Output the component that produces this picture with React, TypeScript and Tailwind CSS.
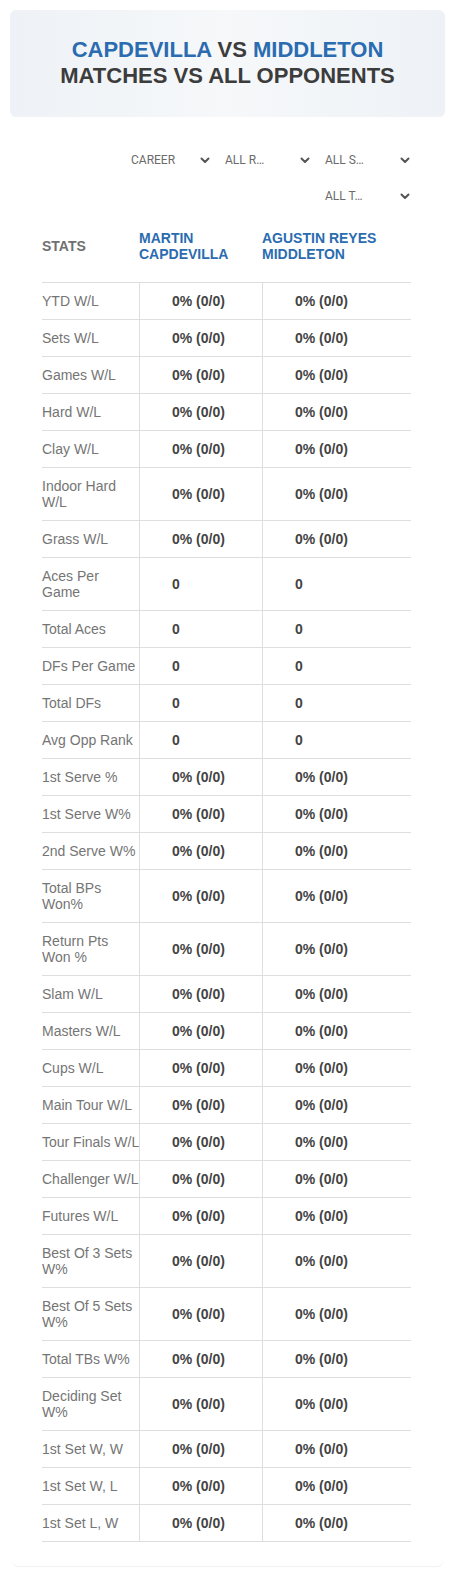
import React from "react";

type Row = { label: React.ReactNode; v: string };

const P = "0% (0/0)";
const rows: Row[] = [
  { label: "YTD W/L", v: P },
  { label: "Sets W/L", v: P },
  { label: "Games W/L", v: P },
  { label: "Hard W/L", v: P },
  { label: "Clay W/L", v: P },
  { label: <>Indoor Hard<br />W/L</>, v: P },
  { label: "Grass W/L", v: P },
  { label: <>Aces Per<br />Game</>, v: "0" },
  { label: "Total Aces", v: "0" },
  { label: "DFs Per Game", v: "0" },
  { label: "Total DFs", v: "0" },
  { label: "Avg Opp Rank", v: "0" },
  { label: "1st Serve %", v: P },
  { label: "1st Serve W%", v: P },
  { label: "2nd Serve W%", v: P },
  { label: <>Total BPs<br />Won%</>, v: P },
  { label: <>Return Pts<br />Won %</>, v: P },
  { label: "Slam W/L", v: P },
  { label: "Masters W/L", v: P },
  { label: "Cups W/L", v: P },
  { label: "Main Tour W/L", v: P },
  { label: "Tour Finals W/L", v: P },
  { label: "Challenger W/L", v: P },
  { label: "Futures W/L", v: P },
  { label: <>Best Of 3 Sets<br />W%</>, v: P },
  { label: <>Best Of 5 Sets<br />W%</>, v: P },
  { label: "Total TBs W%", v: P },
  { label: <>Deciding Set<br />W%</>, v: P },
  { label: "1st Set W, W", v: P },
  { label: "1st Set W, L", v: P },
  { label: "1st Set L, W", v: P },
];

function Chevron() {
  return (
    <svg width="10" height="7" viewBox="0 0 10 7" className="shrink-0">
      <polyline points="1.5,1.5 5,5 8.5,1.5" fill="none" stroke="#555" strokeWidth="2" strokeLinecap="round" strokeLinejoin="round" />
    </svg>
  );
}

function Select({ text, w }: { text: string; w: string }) {
  return (
    <div className={`flex h-[28px] items-center justify-between pl-[4px] pr-[1px] ${w}`}>
      <span className="text-[12px] text-[#6b6b6b] whitespace-nowrap" style={{ fontFamily: "Roboto, 'Noto Sans', sans-serif" }}>{text}</span>
      <Chevron />
    </div>
  );
}

export default function App() {
  return (
    <div className="w-[455px] bg-white px-[10px] pt-[10px] pb-[10px]" style={{ fontFamily: "'Liberation Sans', Arial, sans-serif" }}>
      <div className="rounded-[6px] bg-gradient-to-r from-[#eef2f6] via-[#f6f8fa] to-[#eef2f6] pt-[27px] pb-[28px] text-center text-[22px] font-bold leading-[26px] uppercase text-[#3c3c3c]">
        <div>
          <span className="text-[#2b6cb0]">Capdevilla</span> VS <span className="text-[#2b6cb0]">Middleton</span>
        </div>
        <div>Matches vs All Opponents</div>
      </div>

      <div className="mx-[2px] rounded-[6px] pt-[29px] pb-[24px] shadow-[0_1px_1px_rgba(0,0,0,0.06)]">
        <div className="ml-[30px] w-[369px]">
          <div className="flex flex-wrap justify-end gap-x-[10px] gap-y-[8px]">
            <Select text="CAREER" w="w-[84px]" />
            <Select text="ALL R…" w="w-[90px]" />
            <Select text="ALL S…" w="w-[90px]" />
            <Select text="ALL T…" w="w-[90px]" />
          </div>

          <div className="grid grid-cols-[97px_123px_149px] text-[14px] leading-[16px]">
            <div className="flex items-center border-b border-[#dedede] pt-[20px] pb-[20px] font-bold text-[#707070]">STATS</div>
            <div className="border-b border-[#dedede] pt-[20px] pb-[20px] font-bold text-[#2b6cb0]">MARTIN<br />CAPDEVILLA</div>
            <div className="border-b border-[#dedede] pt-[20px] pb-[20px] font-bold text-[#2b6cb0]">AGUSTIN REYES<br />MIDDLETON</div>

            {rows.map((r, i) => (
              <React.Fragment key={i}>
                <div className="flex items-center whitespace-nowrap border-b border-[#dedede] py-[10px] text-[#757575]">
                  <span>{r.label}</span>
                </div>
                <div className="flex items-center border-b border-l border-[#dedede] py-[10px] pl-[32px] font-bold text-[#444444]">{r.v}</div>
                <div className="flex items-center border-b border-l border-[#dedede] py-[10px] pl-[32px] font-bold text-[#444444]">{r.v}</div>
              </React.Fragment>
            ))}
          </div>
        </div>
      </div>
    </div>
  );
}
